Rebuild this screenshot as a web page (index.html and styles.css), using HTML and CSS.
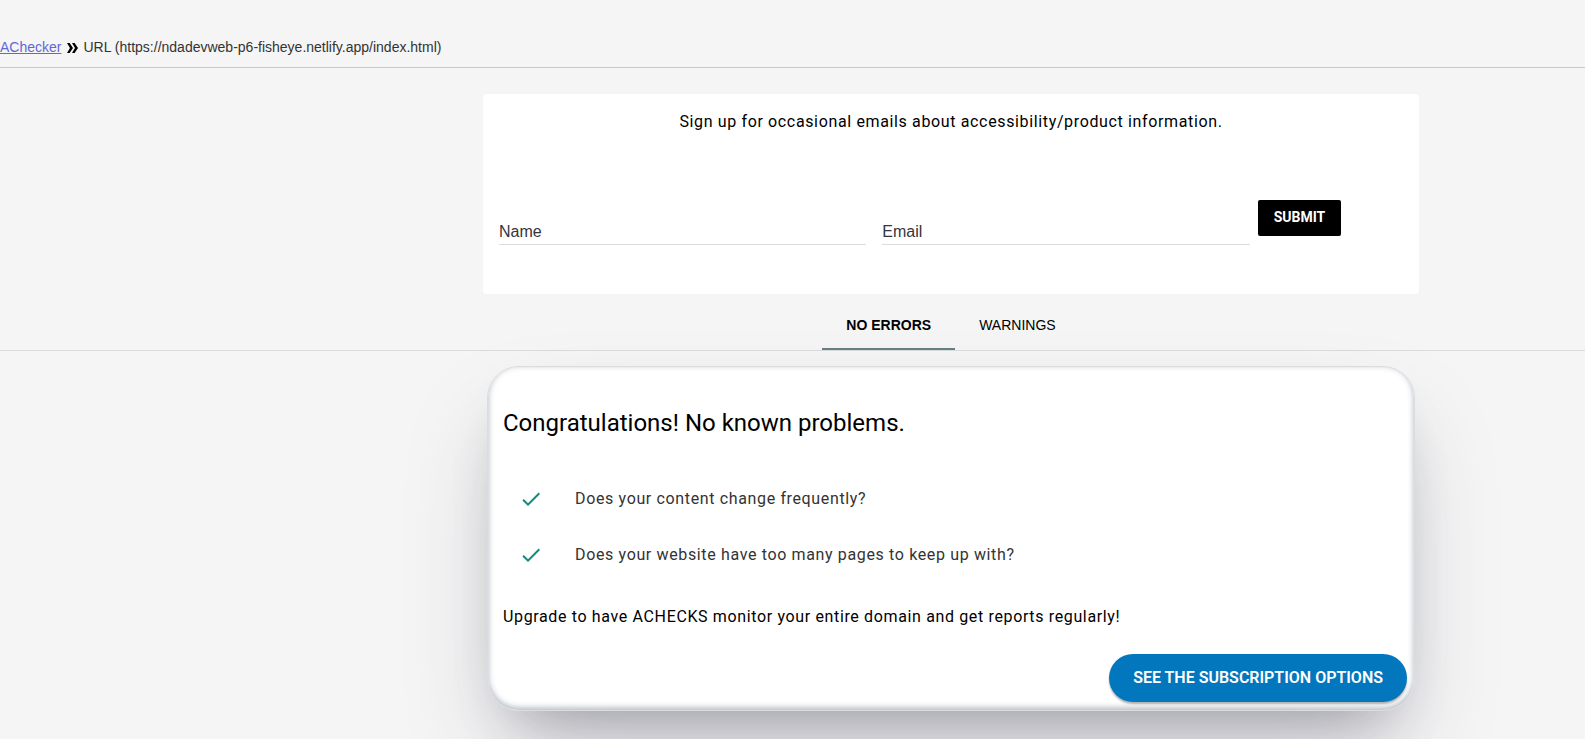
FILE: index.html
```
<!DOCTYPE html>
<html lang="en">
<head>
<meta charset="utf-8">
<title>AChecker</title>
<link rel="stylesheet" href="styles.css">
</head>
<body>
<nav class="breadcrumb" aria-label="Breadcrumb">
  <a class="breadcrumb-link" href="#">AChecker</a>
  <svg class="breadcrumb-sep" viewBox="0 0 12 12" aria-hidden="true"><path d="M1 1h2.600L7 6 3.600 11H1l3-5zM6 1h2.600L12 6 8.600 11H6l3-5z"/></svg>
  <span>URL (https://ndadevweb-p6-fisheye.netlify.app/index.html)</span>
</nav>
<main>
  <section class="shell">
    <form class="signup">
      <p class="signup-title">Sign up for occasional emails about accessibility/product information.</p>
      <div class="signup-row">
        <div class="field"><input class="field-input" type="text" placeholder="Name" aria-label="Name"></div>
        <div class="field"><input class="field-input" type="email" placeholder="Email" aria-label="Email"></div>
        <div><button class="submit" type="submit">SUBMIT</button></div>
      </div>
    </form>
  </section>
  <div class="tabs shell" role="tablist">
    <button class="tab tab-active" type="button" role="tab" aria-selected="true">NO ERRORS</button>
    <button class="tab" type="button" role="tab" aria-selected="false">WARNINGS</button>
  </div>
  <section class="shell results">
    <article class="card">
      <h1 class="card-title">Congratulations! No known problems.</h1>
      <ul class="checks">
        <li class="check"><svg class="check-icon" viewBox="0 0 24 24" aria-hidden="true"><path d="M9 16.170 4.830 12l-1.420 1.410L9 19 21 7l-1.410-1.410z"/></svg>Does your content change frequently?</li>
        <li class="check"><svg class="check-icon" viewBox="0 0 24 24" aria-hidden="true"><path d="M9 16.170 4.830 12l-1.420 1.410L9 19 21 7l-1.410-1.410z"/></svg>Does your website have too many pages to keep up with?</li>
      </ul>
      <p class="upgrade">Upgrade to have ACHECKS monitor your entire domain and get reports regularly!</p>
      <div class="card-actions"><button class="subscribe" type="button">SEE THE SUBSCRIPTION OPTIONS</button></div>
    </article>
  </section>
</main>
</body>
</html>
```
FILE: styles.css
```
* { box-sizing: border-box; }

body {
  margin: 0;
  min-height: 100vh;
  overflow: hidden;
  background: #f5f5f5;
  color: #000;
  font: 16px/24px Roboto, sans-serif;
}

h1, p, ul { margin: 0; padding: 0; }

.breadcrumb {
  display: flex;
  align-items: center;
  gap: 5px;
  padding: 36px 0 8px;
  border-bottom: 1px solid #c8c8c8;
  color: #333;
  font: 14px/23px "Liberation Sans", Arial, sans-serif;
}

.breadcrumb-link { color: #6068d8; }

.breadcrumb-sep {
  width: 12px;
  height: 12px;
  fill: #000;
}

.shell {
  display: flex;
  justify-content: center;
  padding-left: 20%;
}

.signup {
  width: 936px;
  margin-top: 26px;
  padding: 16px 8px 49px;
  border-radius: 4px;
  background: #fff;
}

.signup-title {
  text-align: center;
  letter-spacing: 0.04em;
}

.signup-row {
  display: grid;
  grid-template-columns: 5fr 5fr 2fr;
  margin-top: 66px;
}

.field { padding: 16px 8px 0; }

.field-input {
  display: block;
  width: 100%;
  height: 29px;
  padding: 4px 0 0;
  border: 0;
  border-bottom: 1px solid #dcdcdc;
  outline: 0;
  background: none;
  color: #333;
  font: 16px/24px "Liberation Sans", Arial, sans-serif;
}

.field-input::placeholder { color: #333540; opacity: 1; }

.submit {
  height: 36px;
  padding: 0 16px 2px;
  border: 0;
  border-radius: 2px;
  background: #000;
  color: #fff;
  font: 700 14px/24px Roboto, sans-serif;
}

.tabs {
  margin-top: 8px;
  border-bottom: 1px solid #dcdcde;
}

.tab {
  height: 48px;
  padding: 0 24px;
  border: 0;
  border-bottom: 2px solid transparent;
  background: none;
  color: #000;
  font: 14px/24px "Liberation Sans", Arial, sans-serif;
}

.tab-active {
  border-bottom-color: #648080;
  font-weight: 700;
}

.card {
  width: 928px;
  margin-top: 15px;
  padding: 40px 7px 8px 15px;
  border: 1px solid #dcdcde;
  border-radius: 32px;
  background: #fff;
  box-shadow:
    rgba(50, 50, 93, 0.25) 0 50px 100px -20px,
    rgba(0, 0, 0, 0.3) 0 30px 60px -30px,
    rgba(10, 37, 64, 0.35) 0 -2px 6px 0 inset;
}

.card-title {
  font-size: 24px;
  font-weight: 400;
  line-height: 32px;
}

.checks {
  padding-top: 32px;
  list-style: none;
}

.check {
  display: flex;
  align-items: center;
  gap: 32px;
  height: 56px;
  padding-left: 16px;
  color: #333;
  letter-spacing: 0.04em;
}

.check-icon {
  width: 24px;
  height: 24px;
  fill: #158a7c;
}

.upgrade {
  margin-top: 22px;
  letter-spacing: 0.04em;
}

.card-actions {
  display: flex;
  justify-content: flex-end;
  margin-top: 25px;
}

.subscribe {
  height: 48px;
  padding: 0 24px;
  border: 0;
  border-radius: 24px;
  background: #0277bd;
  color: #fff;
  font: 600 16px/24px Roboto, sans-serif;
  box-shadow: 0 2px 2px rgba(0, 0, 0, 0.3);
}
```
